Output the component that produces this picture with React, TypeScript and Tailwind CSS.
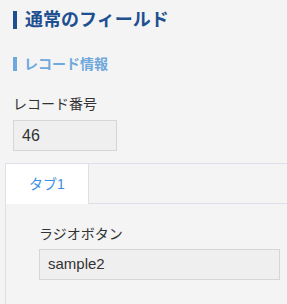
import React from 'react';

const jp = "font-['Liberation_Sans','Noto_Sans_CJK_JP',sans-serif]";

export default function App() {
  return (
    <div className={`w-[287px] h-[304px] overflow-hidden bg-[#f4f4f4] text-[#333] ${jp}`}>
      <div className="pl-[13px] pt-[11px] flex items-center gap-[8px]">
        <span className="w-[4px] h-[18px] bg-[#1d4f91]" />
        <h1 className="text-[18px] leading-[18px] font-bold text-[#1d4f91] whitespace-nowrap">通常のフィールド</h1>
      </div>

      <div className="pl-[13px] mt-[28px] flex items-center gap-[7px]">
        <span className="w-[4px] h-[14px] bg-[#6fa8dc]" />
        <h2 className="text-[14px] leading-[14px] font-bold text-[#6fa8dc]">レコード情報</h2>
      </div>

      <div className="pl-[13px] mt-[26px]">
        <div className="text-[14px] leading-[14px]">レコード番号</div>
        <div className="mt-[9px] w-[104px] h-[31px] border border-[#d6d6d6] bg-[#efefef] pl-[8px] flex items-center text-[16px]">
          46
        </div>
      </div>

      <div className="ml-[5px] mt-[12px] border-l border-t border-[#dde0e8]">
        <div className="flex h-[40px]">
          <div className="w-[83px] bg-white border-r border-[#dde0e8] flex items-center justify-center text-[14px] text-[#3d8fe0]">
            タブ1
          </div>
          <div className="flex-1 border-b border-[#dde0e8]" />
        </div>
        <div className="pl-[33px] pt-[23px] pb-[30px]">
          <div className="text-[14px] leading-[14px]">ラジオボタン</div>
          <div className="mt-[8px] w-[241px] h-[31px] border border-[#d6d6d6] bg-[#efefef] pl-[8px] flex items-center text-[15px]">
            sample2
          </div>
        </div>
      </div>
    </div>
  );
}
